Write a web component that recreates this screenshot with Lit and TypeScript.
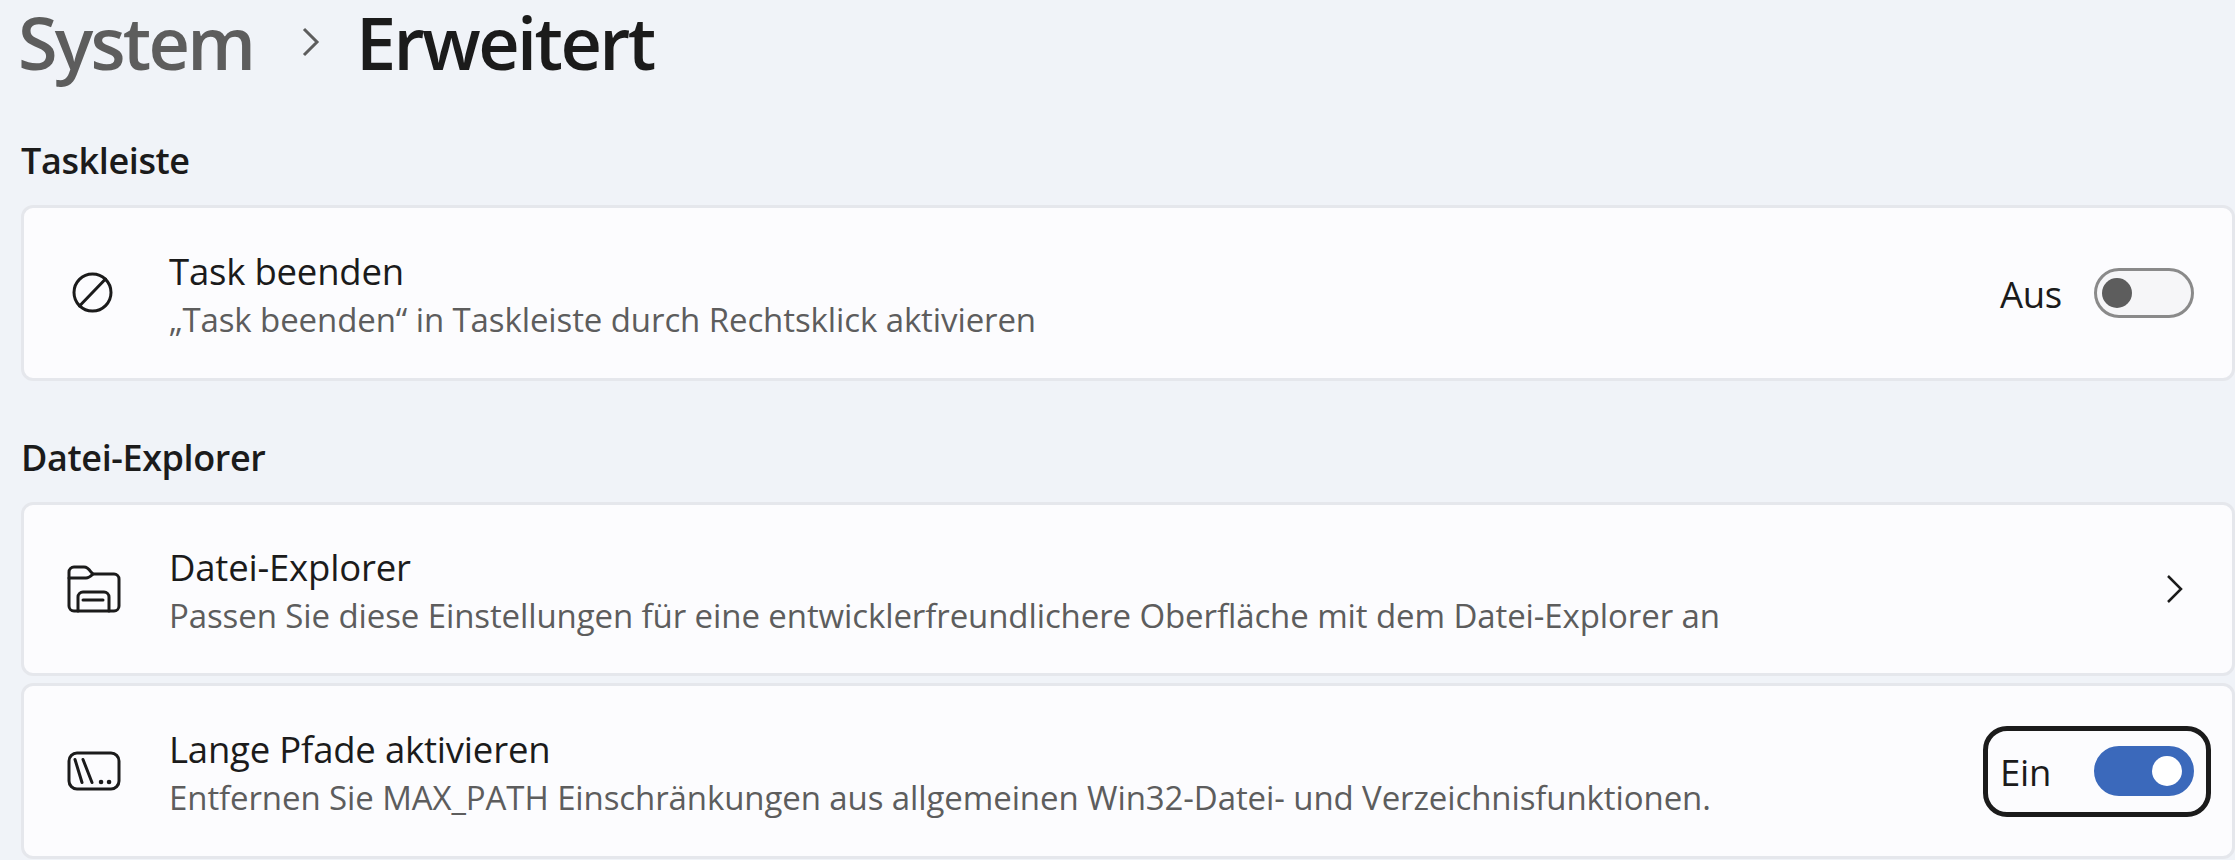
import { css, html, LitElement, svg } from 'lit';
import { customElement } from 'lit/decorators.js';

const ICONS = {
  block: svg`<circle cx="28.5" cy="29.5" r="18.5" /><path d="M15.5 43 41.5 16" />`,
  folder: svg`<path d="M10 52a5 5 0 0 1-5-5V13a5 5 0 0 1 5-5h10c3 0 5 2 7 5l2 2h21a5 5 0 0 1 5 5v27a5 5 0 0 1-5 5Z" />
    <path d="M5 19h17c3 0 5-2 7-4" />
    <path d="M14 52V38a5 5 0 0 1 5-5h21a5 5 0 0 1 5 5v14" />
    <path d="M19 41h20" />`,
  path: svg`<rect x="5" y="12" width="50" height="36" rx="8" />
    <path d="M11 18.5 18 41.5M19 18.5 28 41.5" />
    <path class="dot" d="M37 41h.1M45 41h.1" />`,
};

const SECTIONS = [
  {
    title: 'Taskleiste',
    rows: [
      {
        icon: ICONS.block,
        title: 'Task beenden',
        sub: '„Task beenden“ in Taskleiste durch Rechtsklick aktivieren',
        label: 'Aus',
        on: false,
      },
    ],
  },
  {
    title: 'Datei-Explorer',
    rows: [
      {
        icon: ICONS.folder,
        title: 'Datei-Explorer',
        sub: 'Passen Sie diese Einstellungen für eine entwicklerfreundlichere Oberfläche mit dem Datei-Explorer an',
        short: true,
      },
      {
        icon: ICONS.path,
        title: 'Lange Pfade aktivieren',
        sub: 'Entfernen Sie MAX_PATH Einschränkungen aus allgemeinen Win32-Datei- und Verzeichnisfunktionen.',
        label: 'Ein',
        on: true,
      },
    ],
  },
];

@customElement('app-root')
export class AppRoot extends LitElement {
  static styles = css`
    :host {
      display: block;
      width: 2235px;
      height: 860px;
      overflow: hidden;
      background: #f0f3f8;
      color: #1b1b1b;
      font-family: 'Open Sans', sans-serif;
    }

    .crumbs {
      display: flex;
      align-items: center;
      height: 84px;
      padding: 0 0 4px 18px;
      font-size: 72px;
      line-height: 84px;
      letter-spacing: -2.6px;
    }

    .parent {
      color: #5d5d5d;
      font-weight: 600;
      letter-spacing: -2.8px;
    }

    .current {
      font-weight: 600;
    }

    .crumb-sep {
      width: 18px;
      height: 30px;
      margin: 0 36px 0 49px;
      fill: none;
      stroke: #5d5d5d;
      stroke-width: 3;
    }

    h2 {
      height: 42px;
      margin: 0;
      padding-top: 52px;
      padding-left: 21px;
      font-size: 36px;
      font-weight: 600;
      line-height: 42px;
      letter-spacing: -0.4px;
    }

    .group + .group h2 {
      padding-top: 56px;
    }

    .list {
      display: flex;
      flex-direction: column;
      gap: 7px;
      margin: 23px 0 0 21px;
    }

    .card {
      display: flex;
      align-items: center;
      box-sizing: border-box;
      height: 176px;
      padding: 0 38px 0 40px;
      border: 3px solid #e5e7ec;
      border-radius: 12px;
      background: #fcfcfe;
    }

    .card.short {
      height: 174px;
    }

    .icon {
      flex: none;
      width: 60px;
      height: 60px;
      margin-right: 45px;
      fill: none;
      stroke: #1b1b1b;
      stroke-width: 3;
      stroke-linecap: round;
      stroke-linejoin: round;
    }

    .icon .dot {
      stroke-width: 4.5;
    }

    .text {
      flex: 1;
      min-width: 0;
      padding-top: 4px;
    }

    .title {
      font-size: 36.5px;
      line-height: 48px;
      letter-spacing: -0.2px;
    }

    .sub {
      color: #5d5d5d;
      margin-top: 2px;
      font-size: 33px;
      line-height: 46px;
      letter-spacing: -0.1px;
    }

    .control {
      position: relative;
      display: flex;
      align-items: center;
      font-size: 36.5px;
      letter-spacing: -0.3px;
    }

    .control.focus::after {
      content: '';
      position: absolute;
      top: -20px;
      right: -17px;
      bottom: -20px;
      left: -17px;
      border: 5px solid #1b1b1b;
      border-radius: 24px;
    }

    .control span {
      width: 94px;
      padding-top: 1px;
    }

    .switch {
      display: flex;
      align-items: center;
      box-sizing: border-box;
      width: 100px;
      height: 50px;
      padding: 0 9px 0 5px;
      border: 3px solid #8a8a8a;
      border-radius: 25px;
      background: #f6f6f8;
    }

    .switch i {
      width: 30px;
      height: 30px;
      border-radius: 50%;
      background: #5d5d5d;
    }

    .switch.on {
      justify-content: flex-end;
      border-color: #3b69bb;
      background: #3b69bb;
    }

    .switch.on i {
      background: #fff;
    }

    .chevron {
      width: 16px;
      height: 28px;
      margin-right: 11px;
      fill: none;
      stroke: #1b1b1b;
      stroke-width: 2.5;
    }
  `;

  private renderTrailing(row: any) {
    if (!row.label) {
      return html`<svg class="chevron" viewBox="0 0 16 28"><path d="M1 1 14 14 1 27" /></svg>`;
    }
    return html`<div class="control ${row.on ? 'focus' : ''}">
      <span>${row.label}</span>
      <div class="switch ${row.on ? 'on' : ''}"><i></i></div>
    </div>`;
  }

  render() {
    return html`
      <div class="crumbs">
        <span class="parent">System</span>
        <svg class="crumb-sep" viewBox="0 0 18 30"><path d="M2 2 15 15 2 28" /></svg>
        <span class="current">Erweitert</span>
      </div>
      ${SECTIONS.map(
        (section) => html`<section class="group">
          <h2>${section.title}</h2>
          <div class="list">
            ${section.rows.map(
              (row: any) => html`<div class="card ${row.short ? 'short' : ''}">
                <svg class="icon" viewBox="0 0 60 60">${row.icon}</svg>
                <div class="text">
                  <div class="title">${row.title}</div>
                  <div class="sub">${row.sub}</div>
                </div>
                ${this.renderTrailing(row)}
              </div>`,
            )}
          </div>
        </section>`,
      )}
    `;
  }
}
